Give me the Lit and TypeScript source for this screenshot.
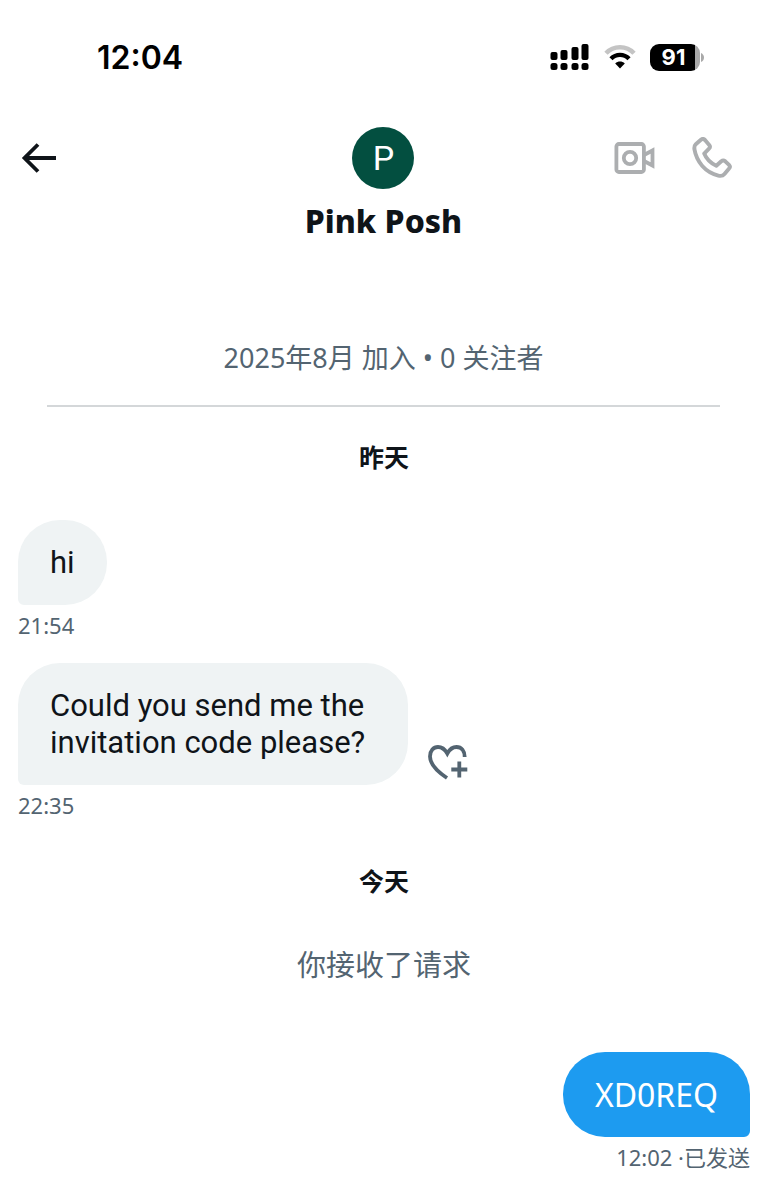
import { LitElement, html, css, svg } from "lit";
import { customElement, property } from "lit/decorators.js";

@customElement("status-bar")
class StatusBar extends LitElement {
  static styles = css`
    :host {
      display: flex;
      justify-content: space-between;
      align-items: center;
      padding: 38px 63px 0 97px;
      height: 40px;
      color: #000;
      font-family: Inter, "Liberation Sans", sans-serif;
    }
    .clock {
      font-size: 32px;
      line-height: 40px;
      font-weight: 600;
    }
    .indicators {
      display: flex;
      align-items: center;
      gap: 14px;
      padding-bottom: 2px;
    }
    svg {
      display: block;
    }
    .battery {
      display: flex;
      align-items: center;
      gap: 1px;
    }
    .cell {
      box-sizing: border-box;
      width: 50px;
      padding-right: 3px;
      border-radius: 9px;
      background: linear-gradient(90deg, #000 45px, #a9a9a9 45px);
      color: #fff;
      font-size: 22px;
      font-weight: 700;
      line-height: 27px;
      text-align: center;
    }
  `;
  render() {
    const bars = [0, 10, 21, 31];
    const heights = [8, 10, 13, 16];
    return html`
      <time class="clock">12:04</time>
      <div class="indicators">
        <svg width="40" height="28" viewBox="0 0 40 28" aria-label="Signal">
          ${bars.map(
            (x, i) => svg`
              <rect x=${x + 0.5} y=${17 - heights[i]} width="7" height=${heights[i]} rx="2"></rect>
              <rect x=${x + 0.5} y="20" width="7" height="7" rx="2.5"></rect>`
          )}
        </svg>
        <svg width="32" height="26" viewBox="0 0 32 26" aria-label="Wi-Fi">
          <path d="M2 9.2C9.5 1.2 22.500 1.200 30 9.200" fill="none" stroke="#c4c4c4" stroke-width="4.600"/>
          <path d="M7 14.800C12 9.600 20 9.600 25 14.800" fill="none" stroke="#000" stroke-width="4.400"/>
          <path d="M11.200 19.400C14 16.900 18 16.900 20.800 19.400L16 24.600Z"/>
        </svg>
        <div class="battery">
          <span class="cell">91</span>
          <svg width="3" height="9" viewBox="0 0 3 9"><path d="M0 0Q3 1.500 3 4.500T0 9Z" fill="#a9a9a9"/></svg>
        </div>
      </div>
    `;
  }
}

@customElement("chat-header")
class ChatHeader extends LitElement {
  static styles = css`
    :host {
      display: grid;
      grid-template-columns: 1fr auto 1fr;
      padding: 49px 35px 0 21px;
      color: #0f1419;
    }
    .back,
    .call {
      border: 0;
      padding: 0;
      background: none;
      color: inherit;
      display: block;
    }
    svg {
      display: block;
    }
    .side {
      display: flex;
      align-items: center;
      height: 62px;
    }
    .actions {
      justify-content: flex-end;
      gap: 37px;
      color: #acaeb0;
    }
    .person {
      display: flex;
      flex-direction: column;
      align-items: center;
      padding-left: 14px;
    }
    .avatar {
      width: 62px;
      height: 62px;
      border-radius: 50%;
      background: #034f40;
      color: #fff;
      font-size: 34px;
      line-height: 62px;
      text-align: center;
    }
    .name {
      margin: 12px 0 0;
      font-size: 32px;
      line-height: 40px;
      font-weight: 800;
      font-family: "Noto Sans", sans-serif;
    }
  `;
  render() {
    return html`
      <div class="side">
        <button class="back" aria-label="Back">
          <svg width="36" height="32" viewBox="0 0 36 32" fill="none" stroke="currentColor" stroke-width="3.800">
            <path d="M17 2.500L3.500 16L17 29.500M3.500 16H35"/>
          </svg>
        </button>
      </div>
      <div class="person">
        <div class="avatar">P</div>
        <h1 class="name">Pink Posh</h1>
      </div>
      <div class="side actions">
        <button class="call" aria-label="Video call">
          <svg width="41" height="34" viewBox="0 0 41 34" fill="none" stroke="currentColor" stroke-width="3.800">
            <rect x="2.400" y="3" width="27.500" height="28" rx="2.500"/>
            <circle cx="16" cy="17" r="6.200"/>
            <path d="M30 14L38.500 9.500V24.500L30 20"/>
          </svg>
        </button>
        <button class="call" aria-label="Voice call">
          <svg width="40" height="42" viewBox="0 0 40 42" fill="none" stroke="currentColor" stroke-width="3.900" stroke-linejoin="round">
            <path d="M3.800 7.200L8.900 2.700Q11 1 13 3L17.200 7.900Q18.800 9.900 17 11.700L12.200 16.600Q15.500 24.800 24.300 28.800L29.300 24.200Q31.300 22.600 33.300 24.300L37 27.800Q38.800 29.700 37.100 31.500L32.500 37Q30.300 39.600 26.300 38.600C13.300 35.300 4.600 25 2.400 12.200Q2 9 3.800 7.200Z"/>
          </svg>
        </button>
      </div>
    `;
  }
}

@customElement("chat-message")
class ChatMessage extends LitElement {
  @property() text = "";
  @property() meta = "";
  @property({ type: Boolean, reflect: true }) own = false;
  @property({ type: Boolean }) reactable = false;

  static styles = css`
    :host {
      display: flex;
      flex-direction: column;
      align-items: flex-start;
    }
    :host([own]) {
      align-items: flex-end;
    }
    .row {
      display: flex;
      align-items: flex-end;
      gap: 19px;
      width: 100%;
    }
    :host([own]) .row {
      justify-content: flex-end;
    }
    .bubble {
      margin: 0;
      box-sizing: border-box;
      max-width: 390px;
      padding: 24px 32px;
      border-radius: 42px 42px 42px 6px;
      background: #eff3f4;
      color: #0f1419;
      font-size: 31px;
      line-height: 37px;
    }
    :host([own]) .bubble {
      border-radius: 42px 42px 6px 42px;
      background: #1d9bf0;
      color: #fff;
      font-family: "Noto Sans", sans-serif;
      font-size: 32px;
    }
    .meta {
      margin-top: 6px;
      font-family: "Noto Sans", "Noto Sans CJK SC", sans-serif;
      font-size: 22px;
      line-height: 28px;
      color: #536471;
    }
    .react {
      border: 0;
      padding: 0 0 4px;
      background: none;
      color: #536471;
    }
    svg {
      display: block;
    }
  `;
  render() {
    return html`
      <div class="row">
        <p class="bubble">${this.text}</p>
        ${this.reactable
          ? html`<button class="react" aria-label="Add reaction">
              <svg width="41" height="37" viewBox="0 0 41 37" fill="none" stroke="currentColor" stroke-width="3.800">
                <path d="M20 34C9.500 27 3 20 3 12.500C3 6.800 6.500 3 11 3C15 3 18 5.500 20.300 9.500C22.500 5.500 25.500 3 29.500 3C34.500 3 37.700 7 37.700 13"/>
                <path d="M32.300 17.500V33.500M24.300 25.500H40.300"/>
              </svg>
            </button>`
          : ""}
      </div>
      <div class="meta">${this.meta}</div>
    `;
  }
}

@customElement("app-root")
class AppRoot extends LitElement {
  static styles = css`
    :host {
      display: block;
      min-height: 100vh;
      background: #fff;
      font-family: Roboto, "Noto Sans CJK SC", sans-serif;
    }
    .joined {
      margin: 98px 47px 0;
      padding-bottom: 28px;
      border-bottom: 2px solid #d4d7d9;
      text-align: center;
      font-family: "Noto Sans", "Noto Sans CJK SC", sans-serif;
      font-size: 27px;
      line-height: 38px;
      color: #536471;
    }
    .thread {
      display: flex;
      flex-direction: column;
      padding: 0 17px 29px 18px;
    }
    .day {
      margin: 33px 0 42px;
      text-align: center;
      font-size: 25px;
      line-height: 38px;
      font-weight: 700;
      color: #0f1419;
    }
    .later {
      margin-top: 24px;
    }
    .today {
      margin-top: 45px;
    }
    .notice {
      margin: 3px 0 67px;
      text-align: center;
      font-size: 29px;
      line-height: 38px;
      color: #536471;
    }
  `;
  render() {
    return html`
      <status-bar></status-bar>
      <chat-header></chat-header>
      <p class="joined">2025年8月 加入 • 0 关注者</p>
      <main class="thread">
        <h2 class="day">昨天</h2>
        <chat-message text="hi" meta="21:54"></chat-message>
        <chat-message
          class="later"
          text="Could you send me the invitation code please?"
          meta="22:35"
          reactable
        ></chat-message>
        <h2 class="day today">今天</h2>
        <p class="notice">你接收了请求</p>
        <chat-message own text="XD0REQ" meta="12:02 ·已发送"></chat-message>
      </main>
    `;
  }
}
